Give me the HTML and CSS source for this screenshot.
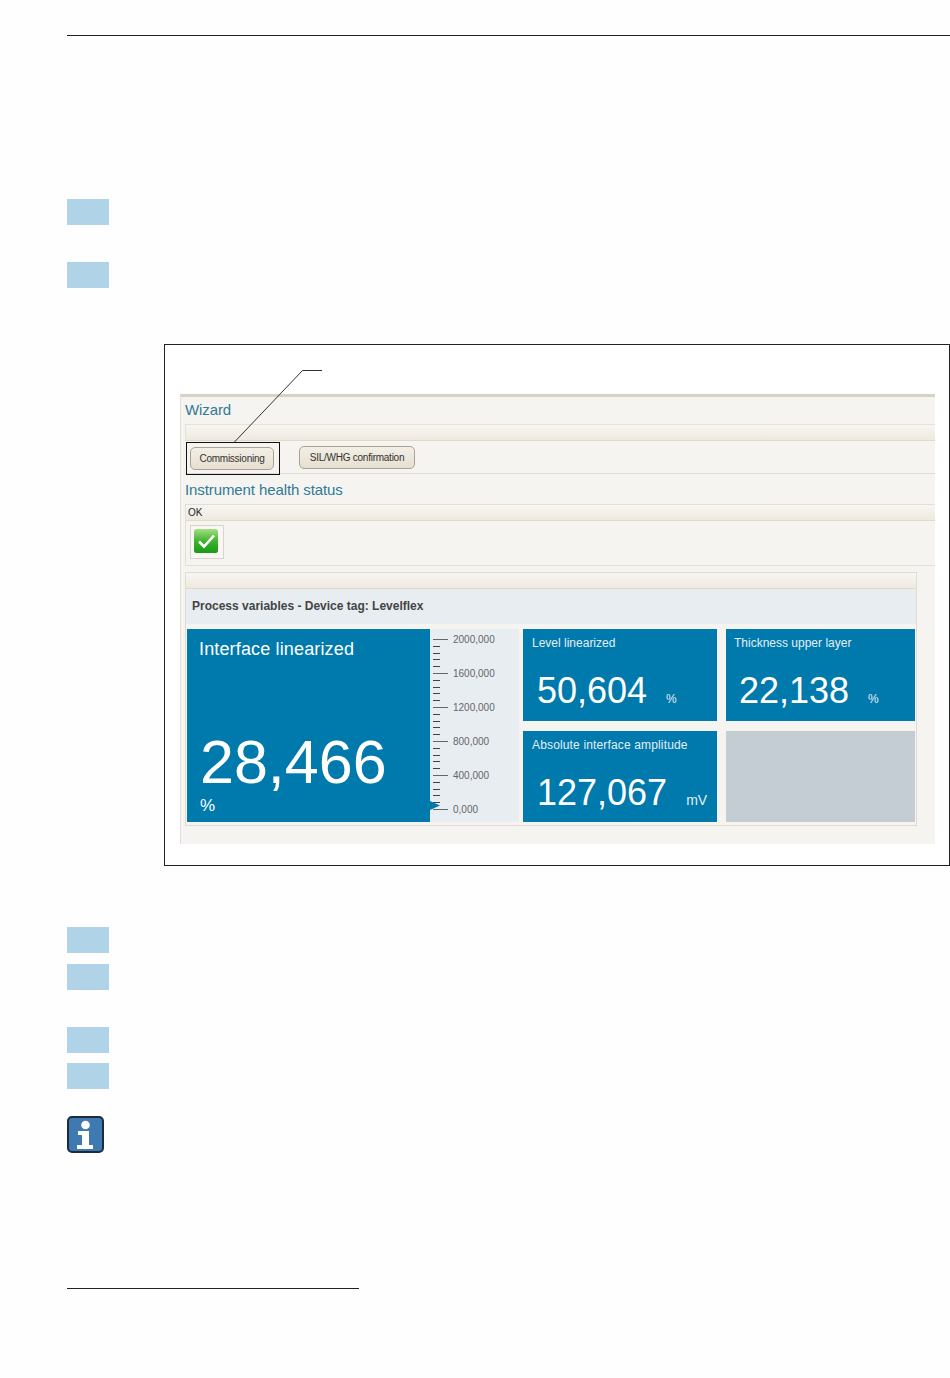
FILE: index.html
```html
<!DOCTYPE html>
<html lang="en">
<head>
<meta charset="utf-8">
<title>Commissioning</title>
<link rel="stylesheet" href="styles.css">
</head>
<body>
<div class="page">
  <div class="top-rule"></div>
  <div class="step step-1"></div>
  <div class="step step-2"></div>
  <section class="figure">
    <svg class="callout" width="170" height="110" viewBox="0 0 170 110"><path d="M157 25.500H137.500L69 97.500" fill="none" stroke="#333" stroke-width="1"/></svg>
    <div class="shot">
      <h2 class="heading heading-wizard">Wizard</h2>
      <div class="bar bar-wizard"></div>
      <div class="buttons">
        <div class="highlight"><span class="btn btn-first">Commissioning</span></div>
        <span class="btn btn-second">SIL/WHG confirmation</span>
      </div>
      <h2 class="heading heading-health">Instrument health status</h2>
      <div class="panel">
        <div class="bar bar-ok">OK</div>
        <div class="status">
          <div class="status-frame">
            <svg width="24" height="24" viewBox="0 0 24 24">
              <defs><linearGradient id="g" x1="0" y1="0" x2="0" y2="1"><stop offset="0" stop-color="#a6de84"/><stop offset=".5" stop-color="#3fb32f"/><stop offset="1" stop-color="#179a15"/></linearGradient></defs>
              <rect width="24" height="24" rx="2.500" fill="url(#g)"/>
              <path d="M5 12.500l5 5L20 6.500" fill="none" stroke="#fff" stroke-width="2.600"/>
            </svg>
          </div>
        </div>
      </div>
      <div class="process">
        <div class="bar bar-process"></div>
        <div class="process-title">Process variables - Device tag: Levelflex</div>
        <div class="tiles">
          <div class="main-cell">
            <div class="tile tile-big">
              <div class="big-label">Interface linearized</div>
              <div class="big-value">28,466</div>
              <div class="big-unit">%</div>
            </div>
            <svg class="scale" width="89" height="193" viewBox="0 0 89 193">
              <path d="M3 10.500h15M3 44.500h15M3 78.500h15M3 112.500h15M3 146.500h15M3 180.500h15" stroke="#666" stroke-width="1" fill="none"/>
              <path d="M3 17.500h7M3 24.500h7M3 30.500h7M3 37.500h7M3 51.500h7M3 58.500h7M3 64.500h7M3 71.500h7M3 85.500h7M3 92.500h7M3 98.500h7M3 105.500h7M3 119.500h7M3 126.500h7M3 132.500h7M3 139.500h7M3 153.500h7M3 160.500h7M3 166.500h7M3 173.500h7" stroke="#444" stroke-width="1" fill="none"/>
              <path d="M0 172l10 4.500L0 181z" fill="#0079ac"/>
              <g class="scale-text">
                <text x="23" y="14">2000,000</text>
                <text x="23" y="48">1600,000</text>
                <text x="23" y="82">1200,000</text>
                <text x="23" y="116">800,000</text>
                <text x="23" y="150">400,000</text>
                <text x="23" y="184">0,000</text>
              </g>
            </svg>
          </div>
          <div class="tile tile-small tile-a">
            <div class="small-label">Level linearized</div>
            <div class="small-row"><span class="small-value">50,604</span><span class="small-unit">%</span></div>
          </div>
          <div class="tile tile-small tile-b">
            <div class="small-label">Thickness upper layer</div>
            <div class="small-row"><span class="small-value">22,138</span><span class="small-unit">%</span></div>
          </div>
          <div class="tile tile-small tile-c">
            <div class="small-label label-wide">Absolute interface amplitude</div>
            <div class="small-row"><span class="small-value">127,067</span><span class="small-unit unit-mv">mV</span></div>
          </div>
          <div class="tile-empty"></div>
        </div>
      </div>
    </div>
  </section>
  <div class="step step-3"></div>
  <div class="step step-4"></div>
  <div class="step step-5"></div>
  <div class="step step-6"></div>
  <svg class="info" width="37" height="37" viewBox="0 0 37 37">
    <rect x="1" y="1" width="35" height="35" rx="4" fill="#3f79b1" stroke="#1c2c3e" stroke-width="2"/>
    <circle cx="18.500" cy="9" r="4.300" fill="#fff"/>
    <path d="M11 15h11v14h4v4H10v-4h5V19h-4z" fill="#fff"/>
  </svg>
  <div class="foot-rule"></div>
</div>
</body>
</html>
```
FILE: styles.css
```css
* { box-sizing: border-box; }
html, body { margin: 0; padding: 0; background: #fefefe; }
body { font-family: "Liberation Sans", Arial, sans-serif; }
.page { width: 950px; height: 1378px; padding-top: 35px; overflow: hidden; }
.top-rule { height: 1px; margin-left: 67px; background: #222; }
.step { width: 42px; height: 26px; margin-left: 67px; background: #b0d3e8; }
.step-1 { margin-top: 163px; }
.step-2 { margin-top: 37px; }
.step-3 { margin-top: 61px; }
.step-4 { margin-top: 11px; }
.step-5 { margin-top: 37px; }
.step-6 { margin-top: 10px; }

.figure { position: relative; width: 786px; height: 522px; margin: 56px 0 0 164px; padding: 49px 14px 0 15px; border: 1px solid #222; background: #fff; }
.callout { position: absolute; left: 0; top: 0; }
.shot { height: 450px; padding: 0 0 0 4px; border-top: 3px solid #d8d2c4; border-left: 1px solid #e4dfd4; background: #f6f4f0; }
.heading { margin: 0; font-weight: 400; color: #2f7a94; font-size: 15px; letter-spacing: -0.1px; line-height: 18px; }
.heading-wizard { padding-top: 4px; height: 27px; }
.heading-health { height: 30px; padding-top: 7px; }
.bar { height: 17px; background: linear-gradient(#f8f6f2, #efe9df); border: 1px solid #e6e2da; border-bottom-color: #e0d9cc; border-right: 0; }
.buttons { display: flex; align-items: flex-start; height: 33px; border-bottom: 1px solid #dedad2; }
.highlight { display: flex; align-items: center; width: 94px; height: 33px; margin: 1px 19px 0 1px; padding-left: 3px; border: 1px solid #111; }
.btn { display: block; height: 23px; line-height: 21px; border: 1px solid #a8a294; border-radius: 5px; background: linear-gradient(#f3efe6, #e7dfd0); color: #333; font-size: 10px; letter-spacing: -0.25px; text-align: center; }
.btn-first { width: 84px; }
.btn-second { width: 116px; margin-top: 5px; }
.panel { height: 62px; border: 1px solid #e3dfd7; border-right: 0; }
.bar-ok { height: 16px; border: 0; border-bottom: 1px solid #e0d9cc; padding-left: 2px; font-size: 10px; line-height: 16px; color: #222; letter-spacing: 0; }
.status { padding: 4px 0 0 4px; }
.status-frame { width: 34px; height: 34px; padding: 3px; border: 1px solid #d8d5ce; background: #f8f7f4; }
.status-frame svg { display: block; }
.process { width: 732px; height: 254px; margin-top: 6px; border: 1px solid #e0dcd3; }
.bar-process { height: 16px; border: 0; border-bottom: 1px solid #e0d9cc; }
.process-title { width: 730px; height: 35px; padding: 10px 0 0 6px; background: #e8edf2; color: #444; font-size: 12px; font-weight: 700; line-height: 14px; }
.tiles { display: grid; grid-template-columns: 332px 194px 194px; grid-template-rows: 92px 91px; column-gap: 4px; row-gap: 10px; padding: 5px 0 0 1px; }
.tiles > .tile-b { margin-left: 5px; width: 189px; padding-left: 8px; }
.main-cell { grid-row: 1 / 3; display: flex; background: #e8edf2; }
.tile { background: #0079ac; color: #fff; }
.tile-big { width: 243px; height: 193px; padding: 10px 0 0 12px; }
.big-label { font-size: 18px; line-height: 21px; letter-spacing: .15px; }
.big-value { margin-top: 70px; padding-left: 1px; font-size: 61px; line-height: 64px; }
.big-unit { font-size: 17px; line-height: 20px; margin-top: 2px; padding-left: 1px; }
.scale { display: block; flex: none; }
.scale-text { font-family: "Liberation Sans", Arial, sans-serif; font-size: 10px; fill: #666; }
.tile-small { padding: 7px 0 0 9px; }
.small-label { font-size: 12px; line-height: 14px; color: #e4eff5; }
.label-wide { letter-spacing: .15px; }
.small-row { display: flex; align-items: baseline; margin-top: 21px; padding-left: 5px; }
.small-value { font-size: 36px; line-height: 40px; }
.small-unit { margin-left: 19px; font-size: 12px; color: #e4eff5; }
.unit-mv { font-size: 14px; }
.tile-empty { background: #c3cdd3; margin-left: 5px; width: 189px; }
.info { display: block; margin: 27px 0 0 67px; }
.foot-rule { width: 292px; height: 1px; margin: 135px 0 0 67px; background: #222; }
```
